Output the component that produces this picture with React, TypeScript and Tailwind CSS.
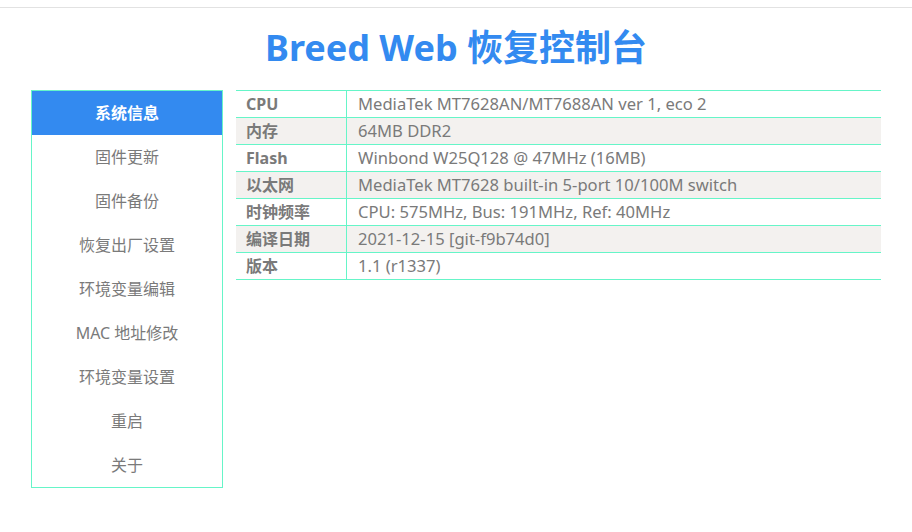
import React from "react";

const menu = [
  "系统信息",
  "固件更新",
  "固件备份",
  "恢复出厂设置",
  "环境变量编辑",
  "MAC 地址修改",
  "环境变量设置",
  "重启",
  "关于",
];

const rows: [string, string][] = [
  ["CPU", "MediaTek MT7628AN/MT7688AN ver 1, eco 2"],
  ["内存", "64MB DDR2"],
  ["Flash", "Winbond W25Q128 @ 47MHz (16MB)"],
  ["以太网", "MediaTek MT7628 built-in 5-port 10/100M switch"],
  ["时钟频率", "CPU: 575MHz, Bus: 191MHz, Ref: 40MHz"],
  ["编译日期", "2021-12-15 [git-f9b74d0]"],
  ["版本", "1.1 (r1337)"],
];

export default function App() {
  return (
    <div
      className="min-h-[532px] w-full bg-white text-[#7a7a7a]"
      style={{ fontFamily: '"Noto Sans", "Noto Sans CJK SC", sans-serif' }}
    >
      <div className="h-[8px] border-b border-[#e2e2e2]" />

      <h1 className="pt-[16px] pb-[18px] text-center text-[36px] font-bold leading-[48px] text-[#338af0]">
        Breed Web 恢复控制台
      </h1>

      <div className="flex items-start gap-[13px] px-[31px]">
        {/* sidebar */}
        <ul className="w-[192px] shrink-0 border border-[#66f5c8]">
          {menu.map((item, i) => (
            <li
              key={item}
              className={
                i === 0
                  ? "flex h-[44px] items-center justify-center bg-[#338af0] text-[16px] font-bold text-white"
                  : "flex h-[44px] items-center justify-center text-[16px] text-[#7a7a7a]"
              }
            >
              {item}
            </li>
          ))}
        </ul>

        {/* info table */}
        <div className="flex-1 border-t border-[#66f5c8]">
          {rows.map(([k, v], i) => (
            <div
              key={k}
              className={
                i % 2 === 1
                  ? "flex h-[27px] border-b border-[#66f5c8] bg-[#f3f1ef] text-[16px]"
                  : "flex h-[27px] border-b border-[#66f5c8] text-[16px]"
              }
            >
              <div className="flex w-[111px] shrink-0 items-center border-r border-[#66f5c8] pl-[10px] font-bold">
                {k}
              </div>
              <div className="flex items-center pl-[11px] text-[16.6px]">{v}</div>
            </div>
          ))}
        </div>
      </div>
    </div>
  );
}
